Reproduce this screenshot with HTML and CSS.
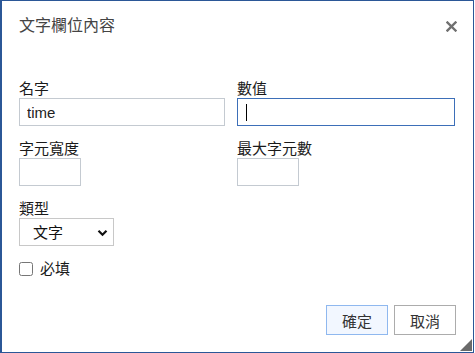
FILE: index.html
```html
<!DOCTYPE html>
<html lang="zh-Hant">
<head>
    <meta charset="UTF-8">
    <title>文字欄位內容</title>
    <link rel="stylesheet" href="styles.css">
</head>
<body>
    <div class="dialog">
        <div class="dialog-header">
            <h1 class="dialog-title">文字欄位內容</h1>
            <button class="close-btn" type="button" aria-label="關閉">
                <svg width="11" height="11" viewBox="0 0 11 11">
                    <path d="M1.5 1.5 L9.5 9.5 M9.5 1.5 L1.5 9.5" stroke="#707070" stroke-width="2.4" stroke-linecap="square"/>
                </svg>
            </button>
        </div>

        <div class="dialog-body">
            <div class="field-grid">
                <label class="field">
                    <span class="field-label">名字</span>
                    <input class="text-input wide" type="text" value="time">
                </label>
                <label class="field">
                    <span class="field-label">數值</span>
                    <span class="input-wrap">
                        <input class="text-input wide focused" type="text" value="">
                        <span class="caret"></span>
                    </span>
                </label>
                <label class="field">
                    <span class="field-label">字元寬度</span>
                    <input class="text-input short" type="text">
                </label>
                <label class="field">
                    <span class="field-label">最大字元數</span>
                    <input class="text-input short" type="text">
                </label>
                <label class="field">
                    <span class="field-label">類型</span>
                    <span class="select-wrap">
                        <select class="select-input">
                            <option>文字</option>
                            <option>密碼</option>
                        </select>
                        <svg class="select-arrow" width="11" height="8" viewBox="0 0 11 8">
                            <path d="M1.5 1.8 L5.5 5.8 L9.5 1.8" fill="none" stroke="#111" stroke-width="2.2"/>
                        </svg>
                    </span>
                </label>
            </div>

            <label class="check-row">
                <input type="checkbox">
                <span>必填</span>
            </label>
        </div>

        <div class="dialog-footer">
            <button class="btn btn-primary" type="button">確定</button>
            <button class="btn" type="button">取消</button>
        </div>

        <span class="resize-grip"></span>
    </div>
</body>
</html>
```

FILE: styles.css
```css
body {
    margin: 0;
    font-family: "Liberation Sans", "Noto Sans CJK TC", sans-serif;
    background: #fff;
}
.dialog {
    position: relative;
    box-sizing: border-box;
    width: 474px;
    height: 353px;
    border: 1px solid #2b5797;
    border-left-width: 2px;
    background: #fff;
    display: flex;
    flex-direction: column;
    padding: 0 17px 17px 17px;
}
.dialog-header {
    display: flex;
    align-items: center;
    justify-content: space-between;
    padding-top: 13px;
    height: 23px;
}
.dialog-title {
    margin: 0;
    font-size: 16px;
    font-weight: normal;
    line-height: 23px;
    color: #444;
}
.close-btn {
    border: 0;
    background: none;
    padding: 0;
    margin-right: -1px;
    margin-top: 1px;
    display: flex;
}
.dialog-body {
    padding-top: 42px;
}
.field-grid {
    display: grid;
    grid-template-columns: 206px 218px;
    column-gap: 12px;
    row-gap: 13px;
}
.field {
    display: flex;
    flex-direction: column;
    align-items: flex-start;
}
.field-label {
    font-size: 15px;
    line-height: 19px;
    color: #1a1a1a;
}
.text-input {
    box-sizing: border-box;
    height: 28px;
    border: 1px solid #c4cad1;
    padding: 0 7px;
    font-family: inherit;
    font-size: 15px;
    color: #222;
    outline: none;
    margin: 0;
}
.text-input.wide { width: 100%; }
.text-input.short { width: 62px; }
.text-input.focused { border-color: #3d6fb8; }

.input-wrap {
    position: relative;
    display: block;
    width: 100%;
}
.input-wrap .text-input { display: block; }
.caret {
    position: absolute;
    left: 9px;
    top: 6px;
    width: 1px;
    height: 17px;
    background: #000;
}

.select-wrap {
    position: relative;
    display: inline-block;
}
.select-input {
    appearance: none;
    box-sizing: border-box;
    width: 95px;
    height: 28px;
    border: 1px solid #c8c8c8;
    border-radius: 0;
    background: #fff;
    padding: 0 0 0 13px;
    font-family: inherit;
    font-size: 15px;
    color: #111;
    outline: none;
}
.select-arrow {
    position: absolute;
    right: 6px;
    top: 11px;
    pointer-events: none;
}
.check-row {
    display: flex;
    align-items: center;
    gap: 7px;
    margin-top: 13px;
    font-size: 15px;
    color: #1a1a1a;
    line-height: 19px;
}
.check-row input {
    margin: 0;
    width: 14px;
    height: 14px;
}
.dialog-footer {
    margin-top: auto;
    display: flex;
    justify-content: flex-end;
    gap: 6px;
}
.btn {
    box-sizing: border-box;
    width: 62px;
    height: 30px;
    border: 1px solid #acacac;
    background: #fff;
    font-family: inherit;
    font-size: 15px;
    color: #333;
    padding: 0;
}
.btn-primary {
    background: #f2f7ff;
    border-color: #8fb8ef;
}
.resize-grip {
    position: absolute;
    right: 1px;
    bottom: 1px;
    width: 0;
    height: 0;
    border-left: 12px solid transparent;
    border-bottom: 12px solid #6a6a6a;
}
```
